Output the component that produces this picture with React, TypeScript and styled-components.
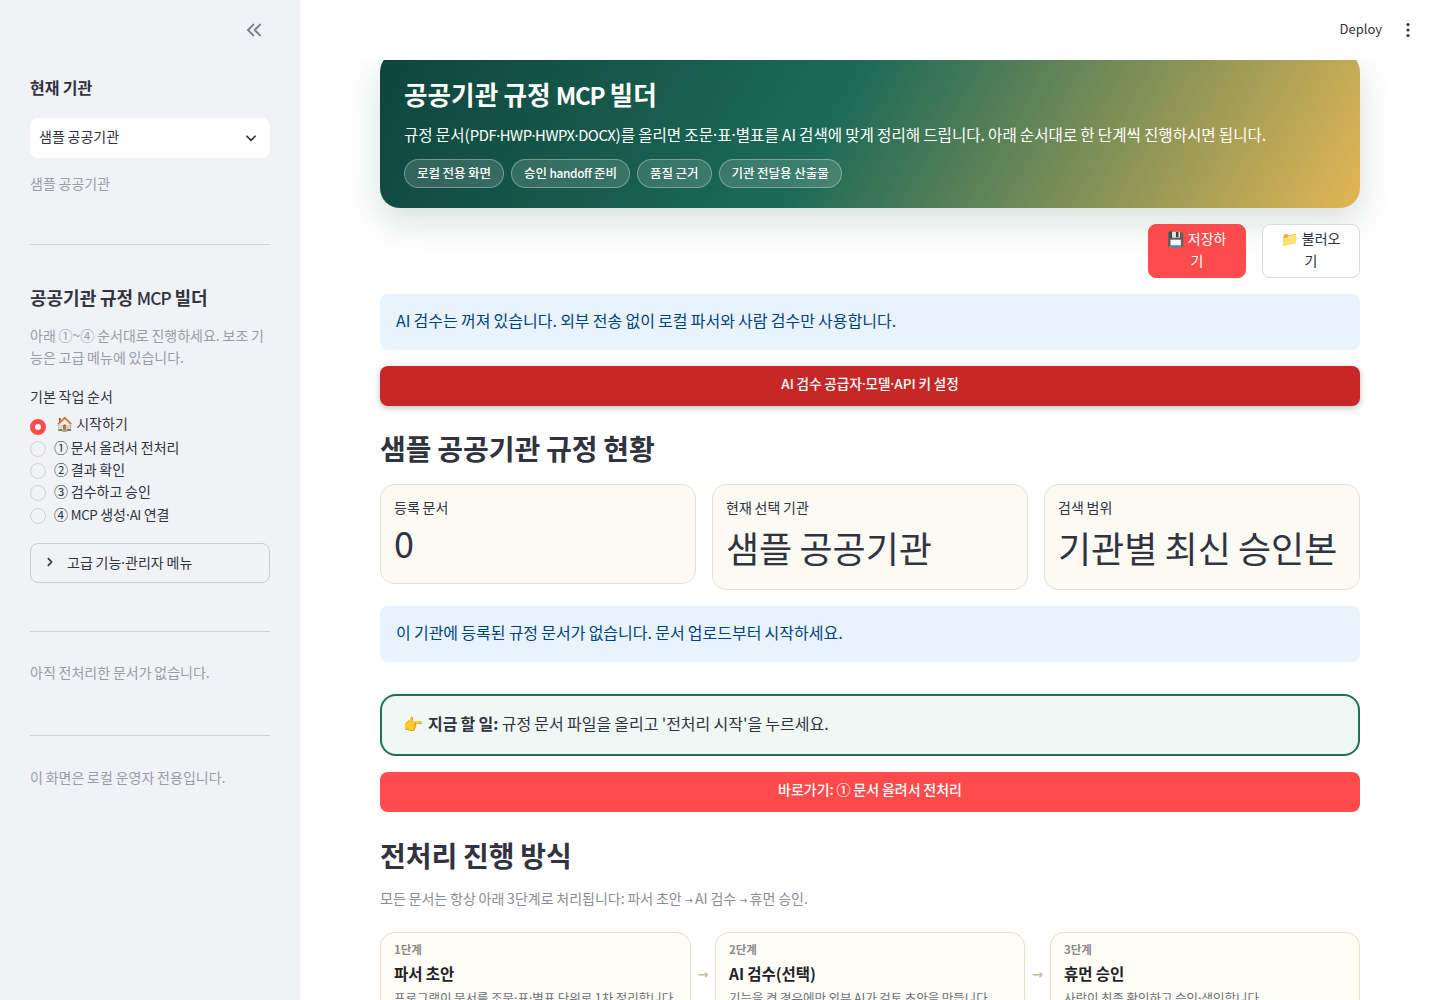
import React from "react";
import styled, { createGlobalStyle } from "styled-components";

const Global = createGlobalStyle`
  html, body { margin: 0; padding: 0; height: 100%; overflow: hidden; background: #fff; }
  body { font-family: "Noto Sans CJK KR", "Noto Sans", "Noto Color Emoji", sans-serif; color: #31333f; }
  * { box-sizing: border-box; word-spacing: -0.024em; }
`;

const Page = styled.div`display: flex; width: 1440px; height: 1000px; overflow: hidden;`;

const Sidebar = styled.aside`
  width: 300px; flex: none; height: 1000px; background: #f0f2f6; padding: 0 30px;
  display: flex; flex-direction: column;
`;
const CollapseRow = styled.div`height: 60px; display: flex; align-items: center; justify-content: flex-end; padding-right: 8px; color: #7b7e8b;`;
const SideTitle = styled.div`
  font-size: 16px; font-weight: 700; line-height: 24px; margin-top: 15px; color: #31333f;
`;
const Select = styled.div`
  height: 40px; margin-top: 19px; background: #fff; border-radius: 8px; display: flex; align-items: center;
  justify-content: space-between; padding: 0 12px 0 9px; font-size: 14px; color: #31333f;
`;
const SelectLabel = styled.span`margin-bottom: 5px;`;
const Muted = styled.div<{ $top: number }>`
  font-size: 14px; line-height: 22px; color: #9a9ca6; margin-top: ${(p) => p.$top}px;
`;
const Rule = styled.hr<{ $top: number }>`
  border: 0; height: 1px; background: #cfd1d6; margin: ${(p) => p.$top}px 0 0; flex: none; width: 100%;
`;
const SideHeading = styled.div`font-size: 18px; font-weight: 700; line-height: 28px; margin-top: 38px; color: #31333f;`;
const GroupLabel = styled.div`font-size: 14px; line-height: 20px; margin-top: 18px; color: #31333f;`;
const RadioList = styled.div`display: flex; flex-direction: column; margin-top: 7px;`;
const RadioRow = styled.div`display: flex; align-items: center; height: 22.4px; font-size: 14px; color: #31333f; gap: 8px;`;
const RadioDot = styled.span<{ $on?: boolean }>`
  width: 16px; height: 16px; border-radius: 50%; flex: none; position: relative; top: ${(p) => (p.$on ? "3px" : "2px")};
  background: ${(p) => (p.$on ? "#fff" : "transparent")};
  border: ${(p) => (p.$on ? "5px solid #ff4b4b" : "1px solid #cfd1d6")};
`;
const RadioText = styled.span<{ $on?: boolean }>`
  margin-left: ${(p) => (p.$on ? "2px" : "0")}; position: relative; top: ${(p) => (p.$on ? "-1px" : "0")};
`;
const Expander = styled.div`
  height: 40px; margin-top: 18px; border: 1px solid #c9cbd1; border-radius: 8px; display: flex; align-items: center;
  padding: 0 0 2px 14px; gap: 12px; font-size: 14px; color: #31333f;
`;

const Main = styled.main`flex: 1; height: 1000px; overflow: hidden; display: flex; flex-direction: column;`;
const Header = styled.header`
  height: 60px; flex: none; background: #fff; position: relative; z-index: 2; display: flex; align-items: center;
  justify-content: flex-end; padding-right: 24px; gap: 18px; font-size: 13px; color: #31333f;
`;
const DeployLabel = styled.span`margin-bottom: 4px;`;
const Content = styled.div`padding: 0 80px; display: flex; flex-direction: column;`;
const Hero = styled.section`
  height: 156px; margin-top: -8px; padding: 24px 24px 0; border-radius: 20px; color: #fff;
  background: linear-gradient(120deg, #0e453c 0%, #1d6a58 46%, #e3b655 100%);
  box-shadow: 0 14px 34px rgba(15, 60, 50, 0.16);
`;
const HeroTitle = styled.h1`margin: 0; font-size: 25.6px; line-height: 35px; font-weight: 700;`;
const HeroText = styled.p`margin: 10px 0 0; font-size: 15.6px; line-height: 24px; white-space: nowrap;`;
const Pills = styled.div`display: flex; gap: 7px; margin-top: 12px;`;
const Pill = styled.span`
  height: 29px; padding: 0 12px 2px; border-radius: 15px; border: 1px solid rgba(255,255,255,.32); background: rgba(255,255,255,.14);
  font-size: 12.5px; font-weight: 500; display: flex; align-items: center; white-space: pre;
`;
const ActionRow = styled.div`display: flex; justify-content: flex-end; gap: 16px; margin-top: 16px;`;
const SmallBtn = styled.div<{ $primary?: boolean }>`
  width: 98px; height: 54px; border-radius: 8px; padding: 2px 14px; font-size: 14px; line-height: 22px; text-align: center;
  background: ${(p) => (p.$primary ? "#ff4b4b" : "#fff")}; color: ${(p) => (p.$primary ? "#fff" : "#31333f")};
  border: 1px solid ${(p) => (p.$primary ? "#ff4b4b" : "#d8dade")};
`;
const Info = styled.div<{ $top: number }>`
  height: 56px; margin-top: ${(p) => p.$top}px; background: #e8f3fc; border-radius: 8px; color: #004280;
  padding: 0 16px 4px; display: flex; align-items: center; font-size: 16px;
`;
const WideBtn = styled.div<{ $dark?: boolean }>`
  height: 40px; margin-top: 16px; border-radius: 8px; color: #fff; font-size: ${(p) => (p.$dark ? "13.6px" : "14px")}; font-weight: 500;
  padding-bottom: 6px; display: flex; align-items: center; justify-content: center;
  background: ${(p) => (p.$dark ? "#c62828" : "#ff4b4b")};
  box-shadow: ${(p) => (p.$dark ? "0 2px 6px rgba(0,0,0,.25)" : "none")};
`;
const SectionTitle = styled.h2<{ $top: number }>`
  margin: ${(p) => p.$top}px 0 0; padding-bottom: 2px; height: 44px; font-size: 28px; line-height: 42px; font-weight: 600; color: #31333f;
`;
const Metrics = styled.div`display: grid; grid-template-columns: repeat(3, 1fr); gap: 16px; margin-top: 13px; align-items: start;`;
const Metric = styled.div`
  background: #fbfaf4; border: 1px solid #e6e2d3; border-radius: 14px; padding: 12px 13px 0;
`;
const MetricLabel = styled.div`font-size: 14px; line-height: 20px; color: #31333f;`;
const MetricValue = styled.div<{ $h: number; $lift: number; $pad: number }>`
  font-size: 36px; line-height: ${(p) => p.$h}px; color: #31333f; margin-top: ${(p) => p.$lift}px; padding-bottom: ${(p) => p.$pad}px; white-space: nowrap;
`;
const NowBox = styled.div`
  height: 62px; margin-top: 32px; border: 2px solid #1f6f5b; border-radius: 16px; background: #f0f8f5; padding: 0 21px 5px;
  display: flex; align-items: center; font-size: 16px; color: #31333f; white-space: pre;
`;
const Caption = styled.div`font-size: 14px; line-height: 22px; color: #8b8d97; margin-top: 9px;`;
const Steps = styled.div`display: grid; grid-template-columns: 311px 24px 310px 25px 310px; margin-top: 20px;`;
const Step = styled.div`
  background: #fffdf8; border: 1px solid #e6dfc8; border-radius: 14px; padding: 7px 13px 16px; height: 120px; min-width: 0;
`;
const StepNo = styled.div`font-size: 11.5px; line-height: 18px; font-weight: 700; color: #8a8a8a;`;
const StepTitle = styled.div`font-size: 15.5px; line-height: 24px; font-weight: 700; color: #1f2328; margin-top: 3px;`;
const StepText = styled.div`font-size: 12.5px; line-height: 20px; color: #6b6f76; margin-top: 3px; white-space: nowrap;`;
const Arrow = styled.div`
  height: 84px; display: flex; align-items: center; justify-content: center; color: #c9bf9f; font-size: 13px; font-weight: 700; font-family: "DejaVu Sans", sans-serif;
`;

const Emoji = styled.span<{ $gap?: number }>`
  font-family: "Noto Color Emoji", sans-serif; line-height: 1; margin-right: ${(p) => p.$gap ?? 0}px;
`;
const MidDot = styled.span`font-family: "Noto Sans", sans-serif;`;
const InlineArrow = styled.span`font-family: "DejaVu Sans", sans-serif; font-size: 0.7em; letter-spacing: -0.05em;`;
const TightLatin = styled.span<{ $bold?: boolean }>`
  font-weight: ${(p) => (p.$bold ? 700 : 500)}; font-size: ${(p) => (p.$bold ? "0.94em" : "0.96em")}; letter-spacing: -0.05em;
`;
const NarrowLatin = styled.span`font-size: 0.95em; letter-spacing: -0.03em;`;

const fmt = (s: string) =>
  s.split(/([·→])/).map((part, i) =>
    part === "·" ? <MidDot key={i}>·</MidDot> : part === "→" ? <InlineArrow key={i}>→</InlineArrow> : part
  );

const ChevronsLeft = () => (
  <svg width="16" height="16" viewBox="0 0 24 24" fill="none" stroke="currentColor" strokeWidth="3" strokeLinecap="round" strokeLinejoin="round">
    <path d="M11 4l-8 8 8 8" /><path d="M21 4l-8 8 8 8" />
  </svg>
);
const ChevronDown = () => (
  <svg width="14" height="14" viewBox="0 0 24 24" fill="none" stroke="#31333f" strokeWidth="3" strokeLinecap="round" strokeLinejoin="round">
    <path d="M5 9l7 7 7-7" />
  </svg>
);
const ChevronRight = () => (
  <svg width="10" height="10" viewBox="0 0 24 24" fill="none" stroke="#31333f" strokeWidth="4" strokeLinecap="round" strokeLinejoin="round">
    <path d="M8 4l8 8-8 8" />
  </svg>
);
const Kebab = () => (
  <svg width="16" height="16" viewBox="0 0 16 16" fill="#31333f"><circle cx="8" cy="2.5" r="1.6" /><circle cx="8" cy="8" r="1.6" /><circle cx="8" cy="13.5" r="1.6" /></svg>
);

const radios = ["① 문서 올려서 전처리", "② 결과 확인", "③ 검수하고 승인"];

export default function App() {
  return (
    <Page>
      <Global />
      <Sidebar>
        <CollapseRow><ChevronsLeft /></CollapseRow>
        <SideTitle>현재 기관</SideTitle>
        <Select><SelectLabel>샘플 공공기관</SelectLabel><ChevronDown /></Select>
        <Muted $top={14}>샘플 공공기관</Muted>
        <Rule $top={50} />
        <SideHeading>공공기관 규정 <TightLatin>MCP</TightLatin> 빌더</SideHeading>
        <Muted $top={12}>아래 ①~④ 순서대로 진행하세요. 보조 기능은 고급 메뉴에 있습니다.</Muted>
        <GroupLabel>기본 작업 순서</GroupLabel>
        <RadioList>
          <RadioRow><RadioDot $on /><RadioText $on><Emoji>🏠</Emoji> 시작하기</RadioText></RadioRow>
          {radios.map((r) => (<RadioRow key={r}><RadioDot /><RadioText>{r}</RadioText></RadioRow>))}
          <RadioRow><RadioDot /><RadioText>④ <NarrowLatin>MCP</NarrowLatin> 생성<MidDot>·</MidDot><NarrowLatin>AI</NarrowLatin> 연결</RadioText></RadioRow>
        </RadioList>
        <Expander><ChevronRight /><span>{fmt("고급 기능·관리자 메뉴")}</span></Expander>
        <Rule $top={48} />
        <Muted $top={29}>아직 전처리한 문서가 없습니다.</Muted>
        <Rule $top={52} />
        <Muted $top={30}>이 화면은 로컬 운영자 전용입니다.</Muted>
      </Sidebar>
      <Main>
        <Header><DeployLabel>Deploy</DeployLabel><Kebab /></Header>
        <Content>
          <Hero>
            <HeroTitle>공공기관 규정 <TightLatin $bold>MCP</TightLatin> 빌더</HeroTitle>
            <HeroText>규정 문서(<NarrowLatin>PDF<MidDot>·</MidDot>HWP<MidDot>·</MidDot>HWPX<MidDot>·</MidDot>DOCX</NarrowLatin>)를 올리면 조문<MidDot>·</MidDot>표<MidDot>·</MidDot>별표를 AI 검색에 맞게 정리해 드립니다. 아래 순서대로 한 단계씩 진행하시면 됩니다.</HeroText>
            <Pills>
              <Pill>로컬 전용 화면</Pill><Pill>승인 <NarrowLatin>handoff</NarrowLatin> 준비</Pill><Pill>품질 근거</Pill><Pill>기관 전달용 산출물</Pill>
            </Pills>
          </Hero>
          <ActionRow>
            <SmallBtn $primary><Emoji>💾</Emoji> 저장하기</SmallBtn>
            <SmallBtn><Emoji>📁</Emoji> 불러오기</SmallBtn>
          </ActionRow>
          <Info $top={16}>AI 검수는 꺼져 있습니다. 외부 전송 없이 로컬 파서와 사람 검수만 사용합니다.</Info>
          <WideBtn $dark><span>{fmt("AI 검수 공급자·모델·API 키 설정")}</span></WideBtn>
          <SectionTitle $top={21}>샘플 공공기관 규정 현황</SectionTitle>
          <Metrics>
            <Metric><MetricLabel>등록 문서</MetricLabel><MetricValue $h={54} $lift={-2} $pad={14}>0</MetricValue></Metric>
            <Metric><MetricLabel>현재 선택 기관</MetricLabel><MetricValue $h={60} $lift={0} $pad={12}>샘플 공공기관</MetricValue></Metric>
            <Metric><MetricLabel>검색 범위</MetricLabel><MetricValue $h={60} $lift={0} $pad={12}>기관별 최신 승인본</MetricValue></Metric>
          </Metrics>
          <Info $top={16}>이 기관에 등록된 규정 문서가 없습니다. 문서 업로드부터 시작하세요.</Info>
          <NowBox><span><Emoji $gap={5}>👉</Emoji><b>지금 할 일:</b> 규정 문서 파일을 올리고 '전처리 시작'을 누르세요.</span></NowBox>
          <WideBtn>바로가기: ① 문서 올려서 전처리</WideBtn>
          <SectionTitle $top={22}>전처리 진행 방식</SectionTitle>
          <Caption>{fmt("모든 문서는 항상 아래 3단계로 처리됩니다: 파서 초안 → AI 검수 → 휴먼 승인.")}</Caption>
          <Steps>
            <Step><StepNo>1단계</StepNo><StepTitle>파서 초안</StepTitle><StepText>{fmt("프로그램이 문서를 조문·표·별표 단위로 1차 정리합니다.")}</StepText></Step>
            <Arrow>→</Arrow>
            <Step><StepNo>2단계</StepNo><StepTitle>AI 검수(선택)</StepTitle><StepText>기능을 켠 경우에만 외부 AI가 검토 초안을 만듭니다.</StepText></Step>
            <Arrow>→</Arrow>
            <Step><StepNo>3단계</StepNo><StepTitle>휴먼 승인</StepTitle><StepText>{fmt("사람이 최종 확인하고 승인·색인합니다.")}</StepText></Step>
          </Steps>
        </Content>
      </Main>
    </Page>
  );
}
